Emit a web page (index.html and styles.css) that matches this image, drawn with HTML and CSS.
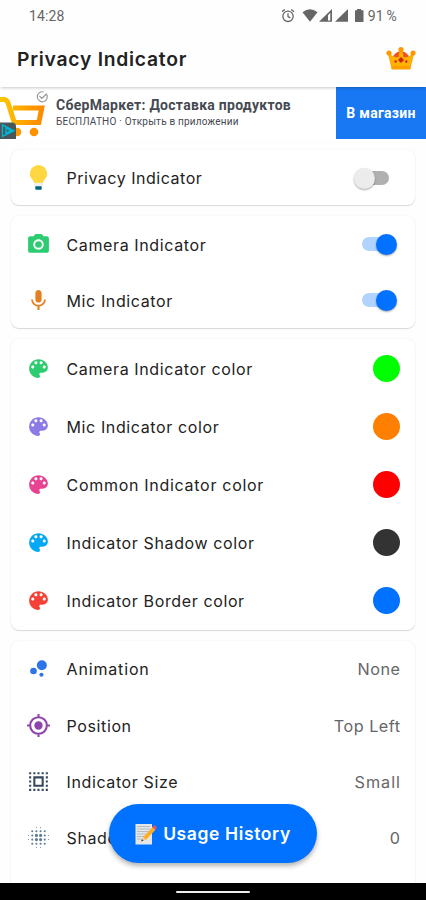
FILE: index.html
```html
<!DOCTYPE html>
<html lang="en">
<head>
<meta charset="utf-8">
<meta name="viewport" content="width=device-width, initial-scale=1">
<title>Privacy Indicator</title>
<link rel="stylesheet" href="styles.css">
</head>
<body>
<svg class="defs" aria-hidden="true">
  <symbol id="palette" viewBox="0 0 24 24"><path d="M12 3c-4.970 0-9 4.030-9 9s4.030 9 9 9c.83 0 1.500-.67 1.500-1.500 0-.39-.15-.74-.39-1.010-.23-.26-.38-.61-.38-.99 0-.83.67-1.500 1.500-1.500H16c2.760 0 5-2.240 5-5 0-4.420-4.030-8-9-8zm-5.500 9c-.83 0-1.500-.67-1.500-1.500S5.670 9 6.500 9 8 9.670 8 10.500 7.330 12 6.500 12zm3-4C8.670 8 8 7.330 8 6.500S8.670 5 9.500 5s1.500.67 1.500 1.500S10.330 8 9.500 8zm5 0c-.83 0-1.500-.67-1.500-1.500S13.670 5 14.500 5s1.500.67 1.500 1.500S15.330 8 14.500 8zm3 4c-.83 0-1.500-.67-1.500-1.500S16.670 9 17.500 9s1.500.67 1.500 1.500-.67 1.500-1.500 1.500z"/></symbol>
</svg>
<div class="screen">
  <div class="status">
    <span class="time">14:28</span>
    <svg class="status-icons" width="84" height="16" viewBox="0 0 84 16">
      <g fill="none" stroke="#666" stroke-width="1.300"><circle cx="6" cy="8.300" r="5.200"/><path d="M6 5.200v3.400l2.300 1.300M0 3.700l2.800-2.300M12 3.700l-2.800-2.300"/></g>
      <path fill="#666" d="M20.500 4.300Q28 -1.700 35.500 4.300L28 13.700z"/>
      <path fill="#666" d="M37 13.800L50 1v12.800zM46 7.200v5.400h2.300V4.800z" fill-rule="evenodd"/>
      <path fill="#666" d="M53 13.800L66 1v12.800z"/>
      <path fill="#666" d="M75 1h4v1.300h2q.5 0 .5.500v10.700q0 .5-.5.500h-7.500q-.5 0-.5-.5V2.800q0-.5.500-.5H75z"/>
    </svg>
    <span class="battery">91 %</span>
  </div>
  <header class="appbar">
    <h1>Privacy Indicator</h1>
    <svg class="crown" width="30" height="23" viewBox="0 0 30 23">
      <path fill="#ffa000" d="M2 7L8 9.500 15 3.500l7 6L28 7 24.300 22H5.700z"/>
      <path fill="#ffb300" d="M3 7l5 3 7-6L22 10l5-3-3 12.500H6z"/>
      <path fill="#f4511e" d="M7 9q3.500-4.500 6.500-4.300L12.500 10q-3 1-5.500-1zM23 9q-3.500-4.500-6.500-4.300L17.500 10q3 1 5.500-1z"/>
      <path fill="#ffa000" d="M5.700 19.300h18.600V22.500H5.700z"/>
      <g fill="#ff9800"><circle cx="3" cy="6" r="2.600"/><circle cx="15" cy="2.700" r="2.600"/><circle cx="27" cy="6" r="2.600"/></g>
      <g fill="#d5200c"><path d="M15 10l3 3-3 3-3-3z"/><circle cx="9.700" cy="14.500" r="1.200"/><circle cx="20.300" cy="14.500" r="1.200"/></g>
    </svg>
  </header>
  <section class="ad">
    <svg class="cart" width="52" height="52" viewBox="0 0 52 52">
      <defs><linearGradient id="gold" x1="0" x2="1"><stop offset="0" stop-color="#fdc800"/><stop offset="1" stop-color="#ff8a00"/></linearGradient></defs>
      <path d="M0 12.500h3.500q3.500 0 4.700 4L14.300 35.500H38.800l3-14.500H13" fill="none" stroke="url(#gold)" stroke-width="5"/>
      <circle cx="17" cy="45" r="4.300" fill="#ff9800"/><circle cx="34" cy="45" r="4.300" fill="#ff9000"/>
      <g fill="none" stroke="#999" stroke-width="1.200"><path d="M46.500 7A5 5 0 1 1 43.500 4.900M39.500 9l2.300 2.300 5-4.500"/></g>
      <path fill="#49565a" d="M0 35.500h12q4 0 4 4V52H0z"/>
      <path fill="none" stroke="#00b5d3" stroke-width="1.400" d="M2.500 38v11.300L14 43.700zM6 41v5.200l5-2.500z"/>
    </svg>
    <div class="ad-copy">
      <div class="ad-title">СберМаркет: Доставка продуктов</div>
      <div class="ad-sub">БЕСПЛАТНО · Открыть в приложении</div>
    </div>
    <div class="ad-cta">В магазин</div>
  </section>
  <main>
    <section class="card">
      <div class="row">
        <svg class="icon" viewBox="0 0 25 25"><path fill="#ffd740" d="M12.500 0a8.600 8.600 0 0 0-8.600 8.800c0 4.500 3.600 6 4.200 9.200h8.800c.600-3.200 4.200-4.700 4.200-9.200A8.600 8.600 0 0 0 12.500 0z"/><path fill="#eee" d="M8.100 17.800h8.800v3.400H8.100z"/><path fill="#006080" d="M9.300 21.200h6.400v2.500q0 1-1 1h-4.400q-1 0-1-1z"/></svg>
        <span class="label tight">Privacy Indicator</span><span class="switch"></span>
      </div>
    </section>
    <section class="card">
      <div class="row">
        <svg class="icon" viewBox="0 0 24 24" fill="#2ecc71"><circle cx="12" cy="12" r="3.200"/><path d="M9 2L7.170 4H4c-1.100 0-2 .9-2 2v12c0 1.100.9 2 2 2h16c1.100 0 2-.9 2-2V6c0-1.100-.9-2-2-2h-3.170L15 2H9zm3 15c-2.760 0-5-2.240-5-5s2.240-5 5-5 5 2.240 5 5-2.240 5-5 5z"/></svg>
        <span class="label">Camera Indicator</span><span class="switch on"></span>
      </div>
      <div class="row">
        <svg class="icon" viewBox="0 0 24 24" fill="#e67e22"><path d="M12 14c1.660 0 2.990-1.340 2.990-3L15 5c0-1.660-1.340-3-3-3S9 3.340 9 5v6c0 1.660 1.340 3 3 3zm5.300-3c0 3-2.540 5.100-5.300 5.100S6.700 14 6.700 11H5c0 3.410 2.720 6.230 6 6.720V21h2v-3.280c3.280-.48 6-3.300 6-6.720h-1.700z"/></svg>
        <span class="label">Mic Indicator</span><span class="switch on"></span>
      </div>
    </section>
    <section class="card colors">
      <div class="row"><svg class="icon green"><use href="#palette"/></svg><span class="label">Camera Indicator color</span><span class="dot lime"></span></div>
      <div class="row"><svg class="icon violet"><use href="#palette"/></svg><span class="label">Mic Indicator color</span><span class="dot orange"></span></div>
      <div class="row"><svg class="icon pink"><use href="#palette"/></svg><span class="label wide">Common Indicator color</span><span class="dot red"></span></div>
      <div class="row"><svg class="icon sky"><use href="#palette"/></svg><span class="label">Indicator Shadow color</span><span class="dot dark"></span></div>
      <div class="row"><svg class="icon coral"><use href="#palette"/></svg><span class="label">Indicator Border color</span><span class="dot blue"></span></div>
    </section>
    <section class="card last">
      <div class="row">
        <svg class="icon" viewBox="0 0 24 24" fill="#2f74e8"><circle cx="7.200" cy="14.400" r="3.200"/><circle cx="14.800" cy="18" r="2"/><circle cx="15.200" cy="8.800" r="4.800"/></svg>
        <span class="label wider">Animation</span><span class="value">None</span>
      </div>
      <div class="row">
        <svg class="icon" viewBox="0 0 24 24" fill="#8e44ad"><circle cx="12" cy="12" r="4"/><path fill="none" stroke="#8e44ad" stroke-width="2" d="M12 1v3M12 20v3M1 12h3M20 12h3M12 4a8 8 0 1 0 0 16 8 8 0 0 0 0-16z"/></svg>
        <span class="label">Position</span><span class="value">Top Left</span>
      </div>
      <div class="row">
        <svg class="icon" viewBox="0 0 24 24" fill="none" stroke="#34495e" stroke-width="2"><path d="M8 8h8v8H8z"/><path stroke-dasharray="2 2" d="M3 4h18M3 20h18M4 7v11M20 7v11"/></svg>
        <span class="label">Indicator Size</span><span class="value small">Small</span>
      </div>
      <div class="row">
        <svg class="icon" viewBox="0 0 24 24" fill="none" stroke="#5d7a99" stroke-linecap="round"><path stroke-width="3" d="M10 10h0M14 10h0M10 14h0M14 14h0"/><path stroke-width="2" d="M6 6h0M10 6h0M14 6h0M18 6h0M6 10h0M18 10h0M6 14h0M18 14h0M6 18h0M10 18h0M14 18h0M18 18h0"/><path stroke-width="1" d="M10 2.500h0M14 2.500h0M2.500 10h0M2.500 14h0M21.500 10h0M21.500 14h0M10 21.500h0M14 21.500h0"/></svg>
        <span class="label">Shadow Size</span><span class="value">0</span>
      </div>
    </section>
  </main>
  <nav class="navbar"><span class="handle"></span></nav>
  <button class="fab">
    <svg width="22" height="22" viewBox="0 0 22 22">
      <path fill="#e4e7e9" d="M.5 1h16.500v20.500H.5z"/><path stroke="#a9b0b4" stroke-width=".8" d="M2 3.500h13M2 6h13M2 8.500h12M2 11h10M2 13.500h8M2 16h5"/>
      <path fill="#ffad22" d="M8 14.500L17.500 4l3 2.700-9.700 10.200z"/><path fill="#ed5265" d="M17.500 4l1.400-1.300q1-.8 2 .2t.8 2L20.500 6.700z"/><path fill="#f5cd9a" d="M8 14.500l2.800 2.400-4.500 1.500z"/><path fill="#333" d="M7.100 16.200l1.500 1.400-2.600 1z"/>
    </svg>
    <span>Usage History</span>
  </button>
</div>
</body>
</html>
```
FILE: styles.css
```css
* { box-sizing: border-box; }
body { margin: 0; background: #fefefe; font-family: Inter, "Liberation Sans", sans-serif; color: #222; }
.defs { position: absolute; width: 0; height: 0; }
.screen { position: relative; width: 426px; height: 900px; overflow: hidden; display: flex; flex-direction: column; background: #fefefe; }
.status { height: 32px; flex: none; display: flex; align-items: center; padding: 0 29px; font-family: Roboto, sans-serif; font-size: 14px; color: #666; }
.time { flex: 1; letter-spacing: .1px; }
.status-icons { margin-right: 2px; }
.battery { letter-spacing: .2px; word-spacing: -1px; }
.appbar { height: 55px; flex: none; display: flex; align-items: center; justify-content: space-between; padding: 0 10px 2px 17px; box-shadow: 0 2px 3px -1px rgba(0,0,0,.22); z-index: 1; background: #fefefe; }
h1 { margin: 0; font-size: 19.300px; font-weight: 600; letter-spacing: .75px; line-height: 24px; }
.ad { height: 52px; flex: none; display: flex; background: #fff; font-family: Roboto, sans-serif; color: #454a52; }
.ad-copy { flex: 1; padding: 9px 0 0 4px; white-space: nowrap; }
.ad-title { font-size: 14px; line-height: 18px; font-weight: 700; letter-spacing: .28px; }
.ad-sub { font-size: 10px; line-height: 16px; letter-spacing: .2px; }
.ad-cta { width: 90px; background: #1877f2; color: #fff; font-weight: 700; font-size: 14px; letter-spacing: .28px; display: flex; align-items: center; justify-content: center; }
main { flex: 1; min-height: 0; overflow: hidden; padding: 11px 11px 0; }
.card { background: #fff; border-radius: 8px; margin-bottom: 10.700px; box-shadow: 0 1px 1px rgba(0,0,0,.13), 0 0 2px rgba(0,0,0,.08); }
.row { height: 56.200px; display: flex; align-items: center; padding: 0 15px; }
.card:first-child .row { height: 55.400px; }
.colors .row { height: 58.200px; }
.icon { width: 25px; height: 25px; flex: none; margin-right: 15.500px; }
.label { flex: 1; padding-top: 1px; font-size: 16px; letter-spacing: .62px; }
.label.tight { letter-spacing: .52px; }
.label.wide { letter-spacing: .71px; }
.label.wider { letter-spacing: .85px; }
.value { padding-top: 1px; font-size: 16.200px; letter-spacing: .5px; margin-right: -.5px; color: #666; }
.value.small { letter-spacing: 1px; margin-right: -1px; }
.switch { position: relative; width: 25px; height: 14px; border-radius: 7px; background: #b0b0b0; margin-right: 11px; }
.switch::after { content: ""; position: absolute; left: -10px; top: -3px; width: 21px; height: 21px; border-radius: 50%; background: #ececec; box-shadow: 0 1px 2px rgba(0,0,0,.35); }
.switch.on { background: #b1d3ff; margin-right: 13px; }
.switch.on::after { left: auto; right: -9.500px; background: #0072ff; }
.dot { width: 27px; height: 27px; border-radius: 50%; }
.lime { background: #0f0; }
.orange { background: #ff8000; }
.red { background: #f00; }
.dark { background: #333; }
.blue { background: #0072ff; }
.green { fill: #2ecc71; }
.violet { fill: #8c7ae6; }
.pink { fill: #e84393; }
.sky { fill: #03a9f4; }
.coral { fill: #f44336; }
.last { height: 300px; }
.navbar { height: 17px; flex: none; background: #000; display: flex; justify-content: center; align-items: center; }
.handle { width: 74px; height: 2px; border-radius: 1px; background: #eee; }
.fab { position: absolute; left: 109px; top: 804px; width: 208px; height: 59px; border: 0; border-radius: 30px; background: #0072ff; color: #fff; display: flex; align-items: center; justify-content: center; gap: 6px; font: 600 17.500px Inter, sans-serif; letter-spacing: .62px; box-shadow: 0 3px 5px rgba(0,0,0,.3); }
```
